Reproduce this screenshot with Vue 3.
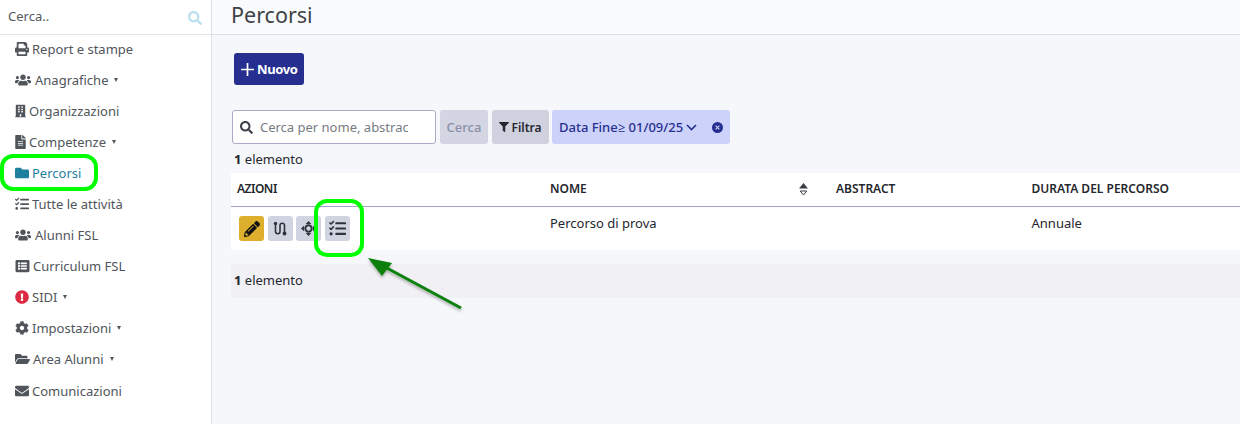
<script setup>
const P = {
  print: ['0 0 512 512', 'M448 192V77.25c0-8.49-3.37-16.62-9.37-22.63L393.37 9.37c-6-6-14.14-9.37-22.63-9.37H96C78.33 0 64 14.33 64 32v160c-35.35 0-64 28.65-64 64v112c0 8.84 7.16 16 16 16h48v96c0 17.67 14.33 32 32 32h320c17.67 0 32-14.33 32-32v-96h48c8.84 0 16-7.16 16-16V256c0-35.35-28.65-64-64-64zm-64 256H128v-96h256v96zm0-224H128V64h192v48c0 8.84 7.16 16 16 16h48v96zm48 72c-13.25 0-24-10.75-24-24 0-13.26 10.75-24 24-24s24 10.74 24 24c0 13.25-10.75 24-24 24z'],
  users: ['0 0 640 512', 'M96 224c35.3 0 64-28.7 64-64s-28.7-64-64-64-64 28.7-64 64 28.7 64 64 64zm448 0c35.3 0 64-28.7 64-64s-28.7-64-64-64-64 28.7-64 64 28.7 64 64 64zm32 32h-64c-17.6 0-33.5 7.1-45.1 18.6 40.3 22.1 68.9 62 75.1 109.4h66c17.7 0 32-14.3 32-32v-32c0-35.3-28.7-64-64-64zm-256 0c61.9 0 112-50.1 112-112S381.9 32 320 32 208 82.1 208 144s50.1 112 112 112zm76.8 32h-8.3c-20.8 10-43.9 16-68.5 16s-47.6-6-68.5-16h-8.3C179.6 288 128 339.6 128 403.2V432c0 26.5 21.5 48 48 48h288c26.5 0 48-21.5 48-48v-28.8c0-63.6-51.6-115.2-115.2-115.2zm-223.7-13.4C161.5 263.1 145.6 256 128 256H64c-35.3 0-64 28.7-64 64v32c0 17.7 14.3 32 32 32h65.9c6.3-47.4 34.9-87.3 75.2-109.4z'],
  building: ['0 0 448 512', 'M436 480h-20V24c0-13.255-10.745-24-24-24H56C42.745 0 32 10.745 32 24v456H12c-6.627 0-12 5.373-12 12v20h448v-20c0-6.627-5.373-12-12-12zM128 76c0-6.627 5.373-12 12-12h40c6.627 0 12 5.373 12 12v40c0 6.627-5.373 12-12 12h-40c-6.627 0-12-5.373-12-12V76zm0 96c0-6.627 5.373-12 12-12h40c6.627 0 12 5.373 12 12v40c0 6.627-5.373 12-12 12h-40c-6.627 0-12-5.373-12-12v-40zm52 148h-40c-6.627 0-12-5.373-12-12v-40c0-6.627 5.373-12 12-12h40c6.627 0 12 5.373 12 12v40c0 6.627-5.373 12-12 12zm76 160h-64v-84c0-6.627 5.373-12 12-12h40c6.627 0 12 5.373 12 12v84zm64-172c0 6.627-5.373 12-12 12h-40c-6.627 0-12-5.373-12-12v-40c0-6.627 5.373-12 12-12h40c6.627 0 12 5.373 12 12v40zm0-96c0 6.627-5.373 12-12 12h-40c-6.627 0-12-5.373-12-12v-40c0-6.627 5.373-12 12-12h40c6.627 0 12 5.373 12 12v40zm0-96c0 6.627-5.373 12-12 12h-40c-6.627 0-12-5.373-12-12V76c0-6.627 5.373-12 12-12h40c6.627 0 12 5.373 12 12v40z'],
  file: ['0 0 384 512', 'M224 136V0H24C10.7 0 0 10.7 0 24v464c0 13.3 10.7 24 24 24h336c13.3 0 24-10.7 24-24V160H248c-13.2 0-24-10.8-24-24zm64 236c0 6.6-5.4 12-12 12H108c-6.6 0-12-5.4-12-12v-8c0-6.6 5.4-12 12-12h168c6.6 0 12 5.4 12 12v8zm0-64c0 6.6-5.4 12-12 12H108c-6.6 0-12-5.4-12-12v-8c0-6.6 5.4-12 12-12h168c6.6 0 12 5.4 12 12v8zm0-72v8c0 6.6-5.4 12-12 12H108c-6.6 0-12-5.4-12-12v-8c0-6.6 5.4-12 12-12h168c6.6 0 12 5.4 12 12zm96-114.1v6.1H256V0h6.1c6.4 0 12.5 2.5 17 7l97.9 98c4.5 4.5 7 10.6 7 16.9z'],
  folder: ['0 0 512 512', 'M464 128H272l-64-64H48C21.49 64 0 85.49 0 112v288c0 26.51 21.49 48 48 48h416c26.51 0 48-21.49 48-48V176c0-26.51-21.49-48-48-48z'],
  tasks: ['0 0 512 512', 'M139.6 24.5a12 12 0 0 0-17 0L59.2 88l-22.6-22a12 12 0 0 0-17 0L3.5 82a12 12 0 0 0 0 17l47.6 47.4a12.8 12.8 0 0 0 17.6 0l15.6-15.6 72.2-72.2a12.1 12.1 0 0 0 .1-17zm0 159.2a12 12 0 0 0-17 0l-63.4 63.7-22.6-22a12 12 0 0 0-17 0L3.5 241.5a12 12 0 0 0 0 17L51 306a12.8 12.8 0 0 0 17.6 0l15.7-15.7 72.2-72.2a12 12 0 0 0 .1-16.9zM64 368c-26.5 0-48.6 21.5-48.6 48S37.5 464 64 464a48 48 0 0 0 0-96zm432 16H208a16 16 0 0 0-16 16v32a16 16 0 0 0 16 16h288a16 16 0 0 0 16-16v-32a16 16 0 0 0-16-16zm0-320H208a16 16 0 0 0-16 16v32a16 16 0 0 0 16 16h288a16 16 0 0 0 16-16V80a16 16 0 0 0-16-16zm0 160H208a16 16 0 0 0-16 16v32a16 16 0 0 0 16 16h288a16 16 0 0 0 16-16v-32a16 16 0 0 0-16-16z'],
  listAlt: ['0 0 512 512', 'M464 480H48c-26.51 0-48-21.49-48-48V80c0-26.51 21.49-48 48-48h416c26.51 0 48 21.49 48 48v352c0 26.51-21.49 48-48 48zM128 120c-22.091 0-40 17.909-40 40s17.909 40 40 40 40-17.909 40-40-17.909-40-40-40zm0 96c-22.091 0-40 17.909-40 40s17.909 40 40 40 40-17.909 40-40-17.909-40-40-40zm0 96c-22.091 0-40 17.909-40 40s17.909 40 40 40 40-17.909 40-40-17.909-40-40-40zm288-136v-32c0-6.627-5.373-12-12-12H204c-6.627 0-12 5.373-12 12v32c0 6.627 5.373 12 12 12h200c6.627 0 12-5.373 12-12zm0 96v-32c0-6.627-5.373-12-12-12H204c-6.627 0-12 5.373-12 12v32c0 6.627 5.373 12 12 12h200c6.627 0 12-5.373 12-12zm0 96v-32c0-6.627-5.373-12-12-12H204c-6.627 0-12 5.373-12 12v32c0 6.627 5.373 12 12 12h200c6.627 0 12-5.373 12-12z'],
  alert: ['0 0 512 512', 'M504 256c0 136.997-111.043 248-248 248S8 392.997 8 256C8 119.083 119.043 8 256 8s248 111.083 248 248zm-248 50c-25.405 0-46 20.595-46 46s20.595 46 46 46 46-20.595 46-46-20.595-46-46-46zm-43.673-165.346l7.418 136c.347 6.364 5.609 11.346 11.982 11.346h48.546c6.373 0 11.635-4.982 11.982-11.346l7.418-136c.375-6.874-5.098-12.654-11.982-12.654h-63.383c-6.884 0-12.356 5.78-11.981 12.654z'],
  cog: ['0 0 512 512', 'M487.4 315.7l-42.6-24.6c4.3-23.2 4.3-47 0-70.2l42.6-24.6c4.9-2.8 7.1-8.6 5.5-14-11.1-35.6-30-67.8-54.7-94.6-3.8-4.1-10-5.1-14.8-2.3L380.8 110c-17.9-15.4-38.5-27.3-60.8-35.1V25.8c0-5.6-3.9-10.5-9.4-11.7-36.7-8.2-74.3-7.8-109.2 0-5.5 1.2-9.4 6.1-9.4 11.7V75c-22.2 7.9-42.8 19.8-60.8 35.1L88.7 85.5c-4.9-2.8-11-1.9-14.8 2.3-24.7 26.7-43.6 58.9-54.7 94.6-1.7 5.4.6 11.2 5.5 14L67.3 221c-4.3 23.2-4.3 47 0 70.2l-42.6 24.6c-4.9 2.8-7.1 8.6-5.5 14 11.1 35.6 30 67.8 54.7 94.6 3.8 4.1 10 5.1 14.8 2.3l42.6-24.6c17.9 15.4 38.5 27.3 60.8 35.1v49.2c0 5.6 3.9 10.5 9.4 11.7 36.7 8.2 74.3 7.8 109.2 0 5.5-1.2 9.4-6.1 9.4-11.7v-49.2c22.2-7.9 42.8-19.8 60.8-35.1l42.6 24.6c4.9 2.8 11 1.9 14.8-2.3 24.7-26.7 43.6-58.9 54.7-94.6 1.5-5.5-.7-11.3-5.6-14.1zM256 336c-44.1 0-80-35.9-80-80s35.9-80 80-80 80 35.9 80 80-35.9 80-80 80z'],
  open: ['0 0 576 512', 'M572.694 292.093L500.27 416.248A63.997 63.997 0 0 1 444.989 448H45.025c-18.523 0-30.064-20.093-20.731-36.093l72.424-124.155A64 64 0 0 1 152 256h399.964c18.523 0 30.064 20.093 20.73 36.093zM152 224h328v-48c0-26.51-21.49-48-48-48H272l-64-64H48C21.49 64 0 85.49 0 112v278.046l69.077-118.418C86.214 242.25 117.989 224 152 224z'],
  mail: ['0 0 512 512', 'M502.3 190.8c3.9-3.1 9.7-.2 9.7 4.7V400c0 26.5-21.5 48-48 48H48c-26.5 0-48-21.5-48-48V195.6c0-5 5.7-7.8 9.7-4.7 22.4 17.4 52.1 39.5 154.1 113.6 21.1 15.4 56.7 47.8 92.2 47.6 35.7.3 72-32.8 92.3-47.6 102-74.1 131.6-96.3 154-113.7zM256 320c23.2.4 56.6-29.2 73.4-41.4 132.7-96.3 142.8-104.7 173.4-128.7 5.8-4.5 9.2-11.5 9.2-18.9v-19c0-26.5-21.5-48-48-48H48C21.5 64 0 85.5 0 112v19c0 7.4 3.4 14.3 9.2 18.9 30.6 23.9 40.7 32.4 173.4 128.7 16.8 12.2 50.2 41.8 73.4 41.4z'],
  search: ['0 0 512 512', 'M505 442.7L405.3 343c-4.5-4.5-10.6-7-17-7H372c27.6-35.3 44-79.7 44-128C416 93.1 322.9 0 208 0S0 93.1 0 208s93.1 208 208 208c48.3 0 92.7-16.4 128-44v16.3c0 6.4 2.5 12.5 7 17l99.7 99.7c9.4 9.4 24.6 9.4 33.9 0l28.3-28.3c9.4-9.4 9.4-24.6.1-34zM208 336c-70.7 0-128-57.2-128-128 0-70.7 57.2-128 128-128 70.7 0 128 57.2 128 128 0 70.7-57.2 128-128 128z'],
  pencil: ['0 0 512 512', 'M497.9 142.1l-46.1 46.1c-4.7 4.7-12.3 4.7-17 0l-111-111c-4.7-4.7-4.7-12.3 0-17l46.1-46.1c18.7-18.7 49.1-18.7 67.9 0l60.1 60.1c18.8 18.7 18.8 49.1 0 67.9zM284.2 99.8L21.6 362.4.4 483.9c-2.9 16.4 11.4 30.6 27.8 27.8l121.5-21.3 262.6-262.6c4.7-4.7 4.7-12.3 0-17l-111-111c-4.8-4.7-12.4-4.7-17.1 0zM124.1 339.9c-5.5-5.5-5.5-14.3 0-19.8l154-154c5.5-5.5 14.3-5.5 19.8 0s5.5 14.3 0 19.8l-154 154c-5.5 5.5-14.3 5.5-19.8 0zM88 424h48v36.3l-64.5 11.3-31.1-31.1L51.7 376H88v48z'],
  filter: ['0 0 512 512', 'M487.976 0H24.028C2.71 0-8.047 25.866 7.058 40.971L192 225.941V432c0 7.831 3.821 15.17 10.237 19.662l80 55.98C298.02 518.69 320 507.493 320 487.98V225.941l184.947-184.97C520.021 25.896 509.338 0 487.976 0z'],
}
const nav = [
  { label: 'Report e stampe', icon: 'print', w: 14, gap: 3 },
  { label: 'Anagrafiche', icon: 'users', w: 16, gap: 4, caret: true },
  { label: 'Organizzazioni', icon: 'building', w: 11, gap: 3 },
  { label: 'Competenze', icon: 'file', w: 11, gap: 3, caret: true },
  { label: 'Percorsi', icon: 'folder', w: 14, gap: 3, active: true },
  { label: 'Tutte le attività', icon: 'tasks', w: 14, gap: 3 },
  { label: 'Alunni FSL', icon: 'users', w: 16, gap: 4 },
  { label: 'Curriculum FSL', icon: 'listAlt', w: 15, gap: 3 },
  { label: 'SIDI', icon: 'alert', w: 14, gap: 3, caret: true, red: true },
  { label: 'Impostazioni', icon: 'cog', w: 14, gap: 3, caret: true },
  { label: 'Area Alunni', icon: 'open', w: 15, gap: 3, caret: true },
  { label: 'Comunicazioni', icon: 'mail', w: 14, gap: 3 },
]
const style = (n) => ({ width: n.w + 'px', marginRight: n.gap + 'px' })
</script>

<template>
  <div class="app">
    <aside class="side">
      <div class="side-search">
        <span>Cerca..</span>
        <svg class="side-search-icon" :viewBox="P.search[0]"><path :d="P.search[1]" /></svg>
      </div>
      <nav class="nav">
        <a v-for="n in nav" :key="n.label" class="item" :class="{ active: n.active }">
          <svg class="ico" :class="{ red: n.red }" :style="style(n)" :viewBox="P[n.icon][0]"><path :d="P[n.icon][1]" /></svg>
          <span>{{ n.label }}</span>
          <i v-if="n.caret" class="caret"></i>
        </a>
      </nav>
    </aside>

    <main class="main">
      <header class="head"><h1>Percorsi</h1></header>
      <div class="new-row">
        <button class="new">
          <svg width="13" height="13" viewBox="0 0 13 13"><path d="M6.5 0v13M0 6.5h13" stroke="#fff" stroke-width="1.7" /></svg>
          Nuovo
        </button>
      </div>
      <div class="filters">
        <div class="input">
          <svg width="13" height="13" :viewBox="P.search[0]"><path :d="P.search[1]" fill="#3c4048" /></svg>
          <span>Cerca per nome, abstrac</span>
        </div>
        <button class="cerca">Cerca</button>
        <button class="filtra">
          <svg width="10" height="10" :viewBox="P.filter[0]"><path :d="P.filter[1]" fill="#25272e" /></svg>
          Filtra
        </button>
        <div class="chip">
          <span>Data Fine≥ 01/09/25</span>
          <svg class="chev" width="11" height="7" viewBox="0 0 11 7"><path d="M1 1l4.500 4.500L10 1" fill="none" stroke="#262f8f" stroke-width="1.600" /></svg>
          <svg class="x" width="11" height="11" viewBox="0 0 11 11"><circle cx="5.500" cy="5.500" r="5.500" fill="#262f8f" /><path d="M3.600 3.600l3.800 3.800M7.400 3.600l-3.800 3.800" stroke="#cdd2fb" stroke-width="1.100" /></svg>
        </div>
      </div>
      <div class="count"><b>1</b> elemento</div>

      <section class="table">
        <div class="row thead">
          <div class="azioni">AZIONI</div>
          <div class="nome">NOME
            <svg class="sort" width="9" height="13" viewBox="0 0 9 13"><path d="M4.500 0L9 5.500H0z" fill="#3a3d45" /><path d="M1.200 8h6.600L4.500 12z" fill="none" stroke="#3a3d45" stroke-width="1" /></svg>
          </div>
          <div>ABSTRACT</div>
          <div>DURATA DEL PERCORSO</div>
        </div>
        <div class="row tbody">
          <div class="actions">
            <button class="act edit"><svg width="16" height="16" :viewBox="P.pencil[0]"><path :d="P.pencil[1]" fill="#111" /></svg></button>
            <button class="act">
              <svg width="14" height="15" viewBox="0 0 14 15">
                <path d="M2.500 3V10.500a2.250 2.250 0 0 0 4.500 0V4.500a2.250 2.250 0 0 1 4.500 0V12" fill="none" stroke="#30333b" stroke-width="1.600" />
                <circle cx="2.500" cy="2.500" r="1.700" fill="#30333b" /><circle cx="11.500" cy="12.500" r="1.900" fill="#30333b" />
              </svg>
            </button>
            <button class="act">
              <svg width="15" height="15" viewBox="0 0 15 15">
                <path d="M7.500 0l2.800 3H4.700zM7.500 15l2.800-3H4.700zM0 7.500l3-2.800v5.600zM15 7.500l-3-2.800v5.600z" fill="#30333b" />
                <circle cx="7.500" cy="7.500" r="3.200" fill="none" stroke="#30333b" stroke-width="2" />
              </svg>
            </button>
            <button class="act"><svg width="17" height="17" :viewBox="P.tasks[0]"><path :d="P.tasks[1]" fill="#30333b" /></svg></button>
          </div>
          <div class="cell">Percorso di prova</div>
          <div class="cell"></div>
          <div class="cell">Annuale</div>
        </div>
      </section>

      <div class="foot"><b>1</b> elemento</div>
    </main>

    <div class="mark mark-side"></div>
    <div class="mark mark-act"></div>
    <svg class="arrow" width="110" height="70" viewBox="0 0 110 70">
      <defs><filter id="sh" x="-20%" y="-20%" width="140%" height="150%"><feDropShadow dx="0" dy="2" stdDeviation="1.500" flood-color="#000" flood-opacity=".3" /></filter></defs>
      <g filter="url(#sh)">
        <path d="M96 56L20 15" stroke="#0b7f0b" stroke-width="3" />
        <path d="M3 6L27 11 17 24z" fill="#0b7f0b" />
      </g>
    </svg>
  </div>
</template>

<style>
html, body { margin: 0; background: #f5f7fb; }
</style>

<style scoped>
.app { position: relative; display: flex; width: 1240px; height: 424px; overflow: hidden; font-family: "Noto Sans", "Open Sans", sans-serif; color: #25272e; background: #f5f7fb; }
.side { width: 211px; flex: none; background: #fff; border-right: 1px solid #dde1ea; }
.side-search { height: 35px; box-sizing: border-box; border-bottom: 1px solid #dce4ec; display: flex; align-items: center; justify-content: space-between; padding: 0 9px 2px 8px; font-size: 13px; color: #555a60; }
.side-search-icon { width: 14px; height: 14px; fill: #b9dff0; margin-top: 3px; }
.nav { display: flex; flex-direction: column; margin-top: -2px; }
.item { display: flex; align-items: center; height: 31.100px; padding-left: 15px; font-size: 13px; color: #50555b; }
.item.active { color: #1f7f9f; }
.ico { height: 14px; flex: none; fill: #50555b; }
.item.active .ico { fill: #1f7f9f; }
.ico.red { fill: #dc2a42; }
.caret { width: 0; height: 0; margin-left: 6px; border-left: 2.500px solid transparent; border-right: 2.500px solid transparent; border-top: 4px solid #50555b; }
.main { flex: 1; min-width: 0; }
.head { height: 35px; box-sizing: border-box; border-bottom: 1px solid #d5e0ea; background: #fafbfd; padding-left: 19px; }
.head h1 { margin: 0; font-size: 21.500px; font-weight: 400; line-height: 30px; color: #3f4348; }
.new-row { box-sizing: border-box; padding: 18px 0 0 22px; height: 57px; }
.new { display: flex; align-items: center; gap: 3px; width: 70px; height: 32px; padding: 0 0 0 7px; border: 0; border-radius: 3px; background: #262f8f; color: #fff; font: 700 13px "Noto Sans", sans-serif; letter-spacing: -.4px; }
.filters { display: flex; padding: 18px 0 0 20px; height: 34px; }
.input { width: 204px; box-sizing: border-box; height: 34px; display: flex; align-items: center; gap: 7px; padding: 0 27px 0 7px; background: #fff; border: 1px solid #a9abc6; border-radius: 3px; font-size: 13px; color: #777b82; overflow: hidden; white-space: nowrap; }
.input span { overflow: hidden; }
.cerca, .filtra { height: 34px; border: 0; border-radius: 3px; font: 600 12.500px "Noto Sans", sans-serif; padding: 0; }
.cerca { width: 48px; margin-left: 4px; background: #d3d5e2; color: #8b8fa8; font-weight: 500; font-size: 13px; }
.filtra { width: 57px; margin-left: 4px; background: #cfd1de; color: #25272e; display: flex; align-items: center; justify-content: center; gap: 2px; font-size: 12px; }
.chip { width: 178px; margin-left: 3px; height: 34px; box-sizing: border-box; display: flex; align-items: center; padding-left: 7px; background: #cdd2fb; border-radius: 3px; color: #262f8f; font-size: 13px; font-weight: 500; white-space: nowrap; }
.chev { margin-left: 3px; }
.x { margin-left: 15px; }
.count { padding: 6px 0 0 22px; font-size: 13px; line-height: 18px; height: 23px; }
.table { margin-left: 19px; background: #fff; }
.row { display: grid; grid-template-columns: 313px 286px 195.500px 1fr; padding-left: 6px; }
.row > div { padding-right: 6px; }
.thead { height: 34px; box-sizing: border-box; border-bottom: 1px solid #a0a4c8; align-items: center; font-size: 12px; font-weight: 600; padding-bottom: 2px; }
.azioni { letter-spacing: -.5px; }
.nome { position: relative; }
.sort { position: absolute; left: 249px; top: 3px; }
.tbody { height: 43px; font-size: 13px; }
.actions { display: flex; gap: 3.670px; padding: 9px 0 0 2px; }
.act { width: 25px; height: 25px; padding: 0; border: 0; border-radius: 3px; background: #d0d3e0; display: flex; align-items: center; justify-content: center; }
.act.edit { background: #deaf2d; }
.cell { padding-top: 7px; line-height: 18px; }
.foot { margin: 14px 0 0 19px; height: 34px; background: #f0f0f5; border-radius: 4px 0 0 4px; padding-left: 3px; font-size: 13px; line-height: 33px; }
.mark { position: absolute; box-sizing: border-box; border: 4px solid #0f0; background: transparent; }
.mark-side { left: 0; top: 154px; width: 98px; height: 37px; border-radius: 13px; }
.mark-act { left: 314px; top: 199px; width: 50px; height: 58px; border-radius: 13px; }
.arrow { position: absolute; left: 365px; top: 252px; overflow: visible; }
</style>
